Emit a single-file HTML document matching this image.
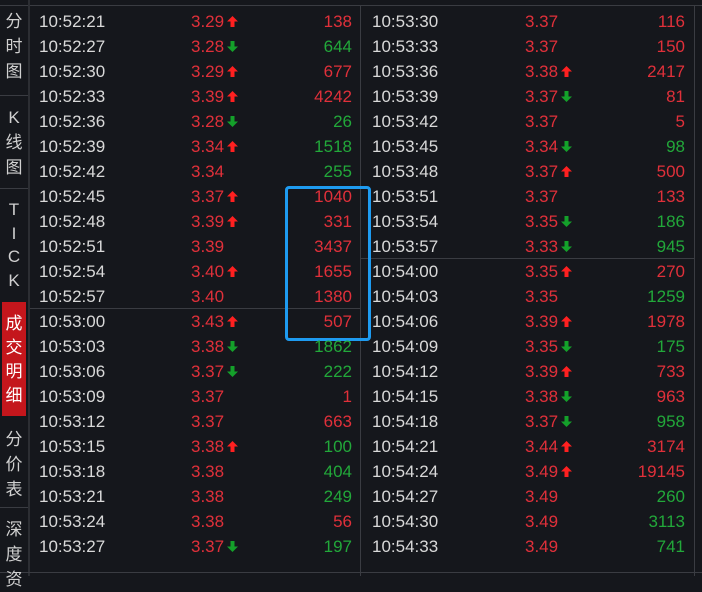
<!DOCTYPE html><html><head><meta charset="utf-8"><style>
body{margin:0;width:702px;height:576px;background:#15171c;overflow:hidden;position:relative;font-family:"Liberation Sans","Noto Sans CJK SC",sans-serif}
.a{position:absolute}
.r{position:absolute;height:25px;line-height:25px;font-size:17px}
.t{color:#d9d9d9}
.p{color:#e0303a}
.red{color:#e0303a}.grn{color:#22a83a}
.side{position:absolute;left:0;width:28px;color:#d0d0d0;font-size:17px;text-align:center;line-height:25px}
</style></head><body>
<div class="a" style="left:0;top:5px;width:702px;height:1px;background:#3a3c42"></div>
<div class="a" style="left:28px;top:0;width:2px;height:576px;background:#2c2e33"></div>
<div class="a" style="left:360px;top:6px;width:1px;height:570px;background:#3a3c42"></div>
<div class="a" style="left:694px;top:6px;width:1px;height:570px;background:#3a3c42"></div>
<div class="a" style="left:30px;top:308px;width:330px;height:1px;background:#3a3c42"></div>
<div class="a" style="left:361px;top:258px;width:333px;height:1px;background:#3a3c42"></div>
<div class="a" style="left:0;top:95px;width:28px;height:1px;background:#3a3c42"></div>
<div class="a" style="left:0;top:188px;width:28px;height:1px;background:#3a3c42"></div>
<div class="a" style="left:0;top:507px;width:28px;height:1px;background:#3a3c42"></div>
<div class="a" style="left:0;top:572px;width:702px;height:1px;background:#3a3c42"></div>
<div class="a" style="left:2px;top:302px;width:24px;height:114px;background:#c4161c"></div>
<div class="side" style="top:9px">分<br>时<br>图</div>
<div class="side" style="top:105px">K<br>线<br>图</div>
<div class="side" style="top:198px;line-height:23.5px">T<br>I<br>C<br>K</div>
<div class="side" style="top:312px;line-height:24px;color:#fff">成<br>交<br>明<br>细</div>
<div class="side" style="top:427px">分<br>价<br>表</div>
<div class="side" style="top:517px">深<br>度<br>资</div>
<div class="a" style="left:285px;top:186px;width:80px;height:149px;border:3px solid #1e9bf0;border-radius:4px"></div>
<div id="rows"></div>
<script>
var L=[["10:52:21","3.29","u","138","r"],["10:52:27","3.28","d","644","g"],["10:52:30","3.29","u","677","r"],["10:52:33","3.39","u","4242","r"],["10:52:36","3.28","d","26","g"],["10:52:39","3.34","u","1518","g"],["10:52:42","3.34","","255","g"],["10:52:45","3.37","u","1040","r"],["10:52:48","3.39","u","331","r"],["10:52:51","3.39","","3437","r"],["10:52:54","3.40","u","1655","r"],["10:52:57","3.40","","1380","r"],["10:53:00","3.43","u","507","r"],["10:53:03","3.38","d","1862","g"],["10:53:06","3.37","d","222","g"],["10:53:09","3.37","","1","r"],["10:53:12","3.37","","663","r"],["10:53:15","3.38","u","100","g"],["10:53:18","3.38","","404","g"],["10:53:21","3.38","","249","g"],["10:53:24","3.38","","56","r"],["10:53:27","3.37","d","197","g"]];
var R=[["10:53:30","3.37","","116","r"],["10:53:33","3.37","","150","r"],["10:53:36","3.38","u","2417","r"],["10:53:39","3.37","d","81","r"],["10:53:42","3.37","","5","r"],["10:53:45","3.34","d","98","g"],["10:53:48","3.37","u","500","r"],["10:53:51","3.37","","133","r"],["10:53:54","3.35","d","186","g"],["10:53:57","3.33","d","945","g"],["10:54:00","3.35","u","270","r"],["10:54:03","3.35","","1259","g"],["10:54:06","3.39","u","1978","r"],["10:54:09","3.35","d","175","g"],["10:54:12","3.39","u","733","r"],["10:54:15","3.38","d","963","r"],["10:54:18","3.37","d","958","g"],["10:54:21","3.44","u","3174","r"],["10:54:24","3.49","u","19145","r"],["10:54:27","3.49","","260","g"],["10:54:30","3.49","","3113","g"],["10:54:33","3.49","","741","g"]];
var up='<svg width="11" height="11" viewBox="0 0 11 11"><path d="M5.5 0L11 5.5H7.5V11H3.5V5.5H0Z" fill="#ff2020"/></svg>';
var dn='<svg width="11" height="11" viewBox="0 0 11 11"><path d="M5.5 11L11 5.5H7.5V0H3.5V5.5H0Z" fill="#14a02a"/></svg>';
var h='';
function add(a,x0,px,vx){a.forEach(function(d,i){var y=8.5+25*i;
h+='<div class="r t" style="left:'+x0+'px;top:'+y+'px">'+d[0]+'</div>';
h+='<div class="r p" style="left:'+px+'px;top:'+y+'px">'+d[1]+'</div>';
if(d[2])h+='<div class="a" style="left:'+(px+36)+'px;top:'+(y+7)+'px;line-height:0">'+(d[2]=='u'?up:dn)+'</div>';
h+='<div class="r '+(d[4]=='r'?'red':'grn')+'" style="right:'+(702-vx)+'px;top:'+y+'px;text-align:right">'+d[3]+'</div>';});}
add(L,39,191,352);add(R,372,525,685);
document.getElementById('rows').innerHTML=h;
</script>
</body></html>
